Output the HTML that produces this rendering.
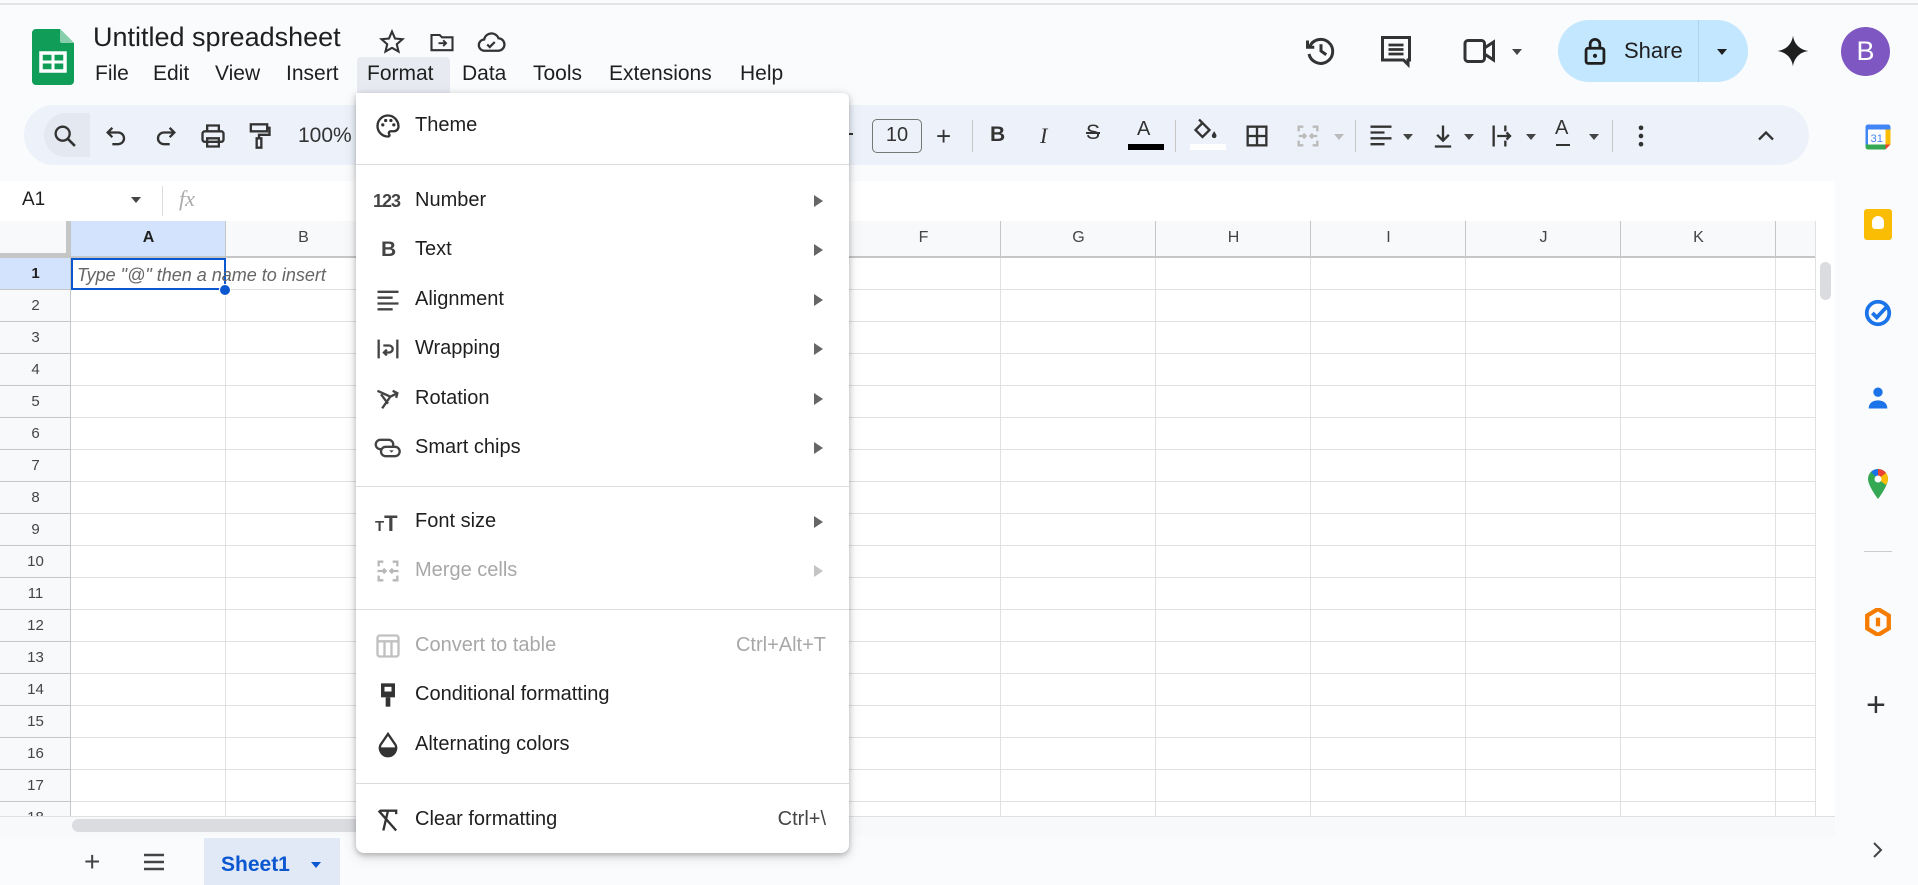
<!DOCTYPE html>
<html><head><meta charset="utf-8"><style>
*{margin:0;padding:0;box-sizing:border-box}
body{width:1918px;height:885px;overflow:hidden;background:#f9fbfd;font-family:"Liberation Sans",Arial,sans-serif;color:#1f1f1f;position:relative}
.a{position:absolute}
.mi{position:absolute;top:62px;font-size:21px;color:#1f1f1f}
.ic{position:absolute;top:122px;width:28px;height:28px}
.rh{position:absolute;left:0;width:71px;text-align:center;font-size:15px;color:#444}
.ch{position:absolute;top:229px;width:155px;text-align:center;font-size:16px;color:#444}
.it{position:absolute;left:415px;font-size:20px;color:#1f1f1f}
.dis{color:#a8a8a8}
.arr{position:absolute;left:814px;width:0;height:0;border-left:9px solid #666;border-top:6px solid transparent;border-bottom:6px solid transparent}
.mic{position:absolute;left:374px;width:28px;height:28px}
.sep{position:absolute;left:356px;width:493px;height:1px;background:#dadce0}
.tsep{position:absolute;top:120px;width:1px;height:32px;background:#c7c7c7}
.car{position:absolute;top:134px;width:0;height:0;border-top:6px solid #444;border-left:5px solid transparent;border-right:5px solid transparent}
</style></head><body>
<div class="a" style="left:0;top:3px;width:1918px;height:2px;background:#e3e3e3"></div>
<svg class="a" style="left:32px;top:29px" width="42" height="56" viewBox="0 0 42 56"><path d="M4 0h24l14 14v38a4 4 0 0 1-4 4H4a4 4 0 0 1-4-4V4a4 4 0 0 1 4-4z" fill="#0f9d58"/><path d="M28 0l14 14H30a2 2 0 0 1-2-2z" fill="#87ceac"/><rect x="9" y="24" width="24" height="18" fill="none" stroke="#fff" stroke-width="3.5"/><path d="M21 24v18M9 33h24" stroke="#fff" stroke-width="3"/></svg>
<div class="a" style="left:93px;top:22px;font-size:27px;color:#1f1f1f">Untitled spreadsheet</div>
<svg class="a" style="left:378px;top:28px" width="28" height="28" viewBox="0 0 24 24"><path d="M12 3l2.6 6 6.4.6-4.9 4.3 1.5 6.3L12 17l-5.6 3.2 1.5-6.3L3 9.6l6.4-.6z" fill="none" stroke="#333" stroke-width="1.8"/></svg>
<svg class="a" style="left:428px;top:28px" width="28" height="28" viewBox="0 0 24 24"><path d="M3 6h7l2 2h9v11H3z" fill="none" stroke="#333" stroke-width="1.8"/><path d="M9 13h6m-2-2.5 2.5 2.5-2.5 2.5" fill="none" stroke="#333" stroke-width="1.6"/></svg>
<svg class="a" style="left:476px;top:27px" width="30" height="30" viewBox="0 0 24 24"><path d="M7 19a4.5 4.5 0 0 1-.5-9A6 6 0 0 1 18 9a4.5 4.5 0 0 1-.5 10z" fill="none" stroke="#333" stroke-width="1.8"/><path d="M9 14l2 2 4-4" fill="none" stroke="#333" stroke-width="1.8"/></svg>
<div class="a" style="left:357px;top:57px;width:93px;height:36px;background:#e7ebf1;border-radius:4px 4px 0 0"></div>
<div class="mi" style="left:95px">File</div><div class="mi" style="left:153px">Edit</div><div class="mi" style="left:215px">View</div><div class="mi" style="left:286px">Insert</div><div class="mi" style="left:367px">Format</div><div class="mi" style="left:462px">Data</div><div class="mi" style="left:533px">Tools</div><div class="mi" style="left:609px">Extensions</div><div class="mi" style="left:740px">Help</div>
<svg class="a" style="left:1303px;top:33px" width="36" height="36" viewBox="0 0 24 24"><path d="M4.5 9A8 8 0 1 1 4 14" fill="none" stroke="#333" stroke-width="2"/><path d="M3 5v4.5h4.5" fill="none" stroke="#333" stroke-width="2"/><path d="M12 7.5V12l3.5 2.5" fill="none" stroke="#333" stroke-width="2"/></svg>
<svg class="a" style="left:1378px;top:33px" width="36" height="36" viewBox="0 0 24 24"><path d="M3 3h18v15h-1v3l-3-3H3z" fill="none" stroke="#333" stroke-width="2"/><path d="M7 8h10M7 11h10M7 14h10" stroke="#333" stroke-width="1.8"/></svg>
<svg class="a" style="left:1462px;top:36px" width="36" height="30" viewBox="0 0 24 20"><rect x="2" y="3" width="13" height="14" rx="2" fill="none" stroke="#333" stroke-width="2"/><path d="M15 8l6-4v12l-6-4" fill="none" stroke="#333" stroke-width="2"/></svg>
<div class="car" style="left:1512px;top:49px"></div>
<div class="a" style="left:1558px;top:20px;width:190px;height:62px;background:#c2e7ff;border-radius:31px"></div>
<div class="a" style="left:1698px;top:20px;width:1px;height:62px;background:#a8d4f0"></div>
<svg class="a" style="left:1584px;top:37px" width="22" height="28" viewBox="0 0 16 20"><rect x="1.5" y="8" width="13" height="11" rx="1.5" fill="none" stroke="#1f1f1f" stroke-width="2"/><path d="M4.5 8V5a3.5 3.5 0 0 1 7 0v3" fill="none" stroke="#1f1f1f" stroke-width="2"/><circle cx="8" cy="13.5" r="1.5" fill="#1f1f1f"/></svg>
<div class="a" style="left:1624px;top:38px;font-size:22px;color:#1f1f1f">Share</div>
<div class="car" style="left:1717px;top:49px;border-top-color:#1f1f1f"></div>
<svg class="a" style="left:1776px;top:33px" width="34" height="36" viewBox="0 0 24 24"><path d="M12 1C12.6 7 17 11.4 23 12 17 12.6 12.6 17 12 23 11.4 17 7 12.6 1 12 7 11.4 11.4 7 12 1z" fill="#1f1f1f"/></svg>
<div class="a" style="left:1841px;top:27px;width:49px;height:49px;border-radius:50%;background:#7e57c2;color:#fff;font-size:27px;text-align:center;line-height:49px">B</div>
<div class="a" style="left:24px;top:105px;width:1785px;height:60px;background:#edf2fa;border-radius:30px"></div>
<div class="a" style="left:44px;top:113px;width:46px;height:44px;background:#e3e8f1;border-radius:22px 0 0 22px"></div>
<svg class="ic" style="left:51px" viewBox="0 0 24 24"><circle cx="10" cy="10" r="6" fill="none" stroke="#333" stroke-width="2"/><path d="M14.5 14.5l6 6" stroke="#333" stroke-width="2.2"/></svg>
<svg class="ic" style="left:103px" viewBox="0 0 24 24"><path d="M8 5L4 9l4 4" fill="none" stroke="#333" stroke-width="2"/><path d="M4 9h9a5 5 0 0 1 0 10H8" fill="none" stroke="#333" stroke-width="2"/></svg>
<svg class="ic" style="left:151px" viewBox="0 0 24 24"><path d="M16 5l4 4-4 4" fill="none" stroke="#333" stroke-width="2"/><path d="M20 9h-9a5 5 0 0 0 0 10h5" fill="none" stroke="#333" stroke-width="2"/></svg>
<svg class="ic" style="left:199px" viewBox="0 0 24 24"><rect x="3" y="8" width="18" height="9" rx="2" fill="none" stroke="#333" stroke-width="2"/><path d="M7 8V3h10v5M7 14h10v7H7z" fill="none" stroke="#333" stroke-width="2"/></svg>
<svg class="ic" style="left:245px" viewBox="0 0 24 24"><rect x="5" y="2" width="14" height="6" fill="none" stroke="#333" stroke-width="2"/><path d="M19 5h2v6h-9v3" fill="none" stroke="#333" stroke-width="2"/><rect x="10" y="14" width="4" height="8" fill="none" stroke="#333" stroke-width="2"/></svg>
<div class="a" style="left:298px;top:124px;font-size:21px;color:#333">100%</div>
<div class="a" style="left:845px;top:133px;width:8px;height:2px;background:#333"></div>
<div class="a" style="left:872px;top:119px;width:50px;height:34px;border:1.5px solid #747775;border-radius:5px;font-size:20px;text-align:center;line-height:31px;color:#333">10</div>
<div class="a" style="left:936px;top:124px;font-size:26px;color:#333;line-height:24px">+</div>
<div class="tsep" style="left:972px"></div>
<div class="a" style="left:990px;top:123px;font-size:21px;font-weight:bold;color:#333">B</div>
<div class="a" style="left:1040px;top:123px;font-size:22px;font-style:italic;font-family:'Liberation Serif',serif;color:#333">I</div>
<div class="a" style="left:1086px;top:121px;font-size:21px;color:#333;text-decoration:line-through">S</div>
<div class="a" style="left:1137px;top:118px;font-size:20px;color:#333">A</div>
<div class="a" style="left:1128px;top:144px;width:36px;height:6px;background:#000"></div>
<div class="tsep" style="left:1175px"></div>
<svg class="ic" style="left:1192px;top:116px" viewBox="0 0 24 24"><path d="M6 3l9 9-6 6-6-6 6-6" fill="none" stroke="#333" stroke-width="2"/><path d="M19 13c1.2 2 2 3 2 4a2 2 0 0 1-4 0c0-1 .8-2 2-4z" fill="#333"/></svg>
<div class="a" style="left:1190px;top:144px;width:36px;height:6px;background:#fff"></div>
<svg class="ic" style="left:1243px" viewBox="0 0 24 24"><rect x="4" y="4" width="16" height="16" fill="none" stroke="#333" stroke-width="2"/><path d="M12 4v16M4 12h16" stroke="#333" stroke-width="2"/></svg>
<svg class="ic" style="left:1294px" viewBox="0 0 24 24"><path d="M4 8V4h4M16 4h4v4M20 16v4h-4M8 20H4v-4M4 12h6m-2-2 2 2-2 2M20 12h-6m2-2-2 2 2 2" fill="none" stroke="#bbb" stroke-width="2"/></svg>
<div class="car" style="left:1334px;border-top-color:#bbb"></div>
<div class="tsep" style="left:1355px"></div>
<svg class="ic" style="left:1367px" viewBox="0 0 24 24"><path d="M3 4h18M3 9h12M3 14h18M3 19h12" stroke="#333" stroke-width="2"/></svg>
<div class="car" style="left:1403px"></div>
<svg class="ic" style="left:1429px" viewBox="0 0 24 24"><path d="M12 3v13m-5-5 5 5 5-5M5 21h14" fill="none" stroke="#333" stroke-width="2"/></svg>
<div class="car" style="left:1464px"></div>
<svg class="ic" style="left:1489px" viewBox="0 0 24 24"><path d="M4 3v18M14 3v5M14 16v5M7 12h11m-3-3 3 3-3 3" fill="none" stroke="#333" stroke-width="2"/></svg>
<div class="car" style="left:1526px"></div>
<div class="a" style="left:1555px;top:117px;font-size:20px;color:#333">A</div>
<div class="a" style="left:1556px;top:144px;width:14px;height:2px;background:#333"></div>
<div class="car" style="left:1589px"></div>
<div class="tsep" style="left:1612px"></div>
<svg class="ic" style="left:1627px" viewBox="0 0 24 24"><circle cx="12" cy="5" r="2" fill="#333"/><circle cx="12" cy="12" r="2" fill="#333"/><circle cx="12" cy="19" r="2" fill="#333"/></svg>
<svg class="ic" style="left:1752px" viewBox="0 0 24 24"><path d="M6 15l6-6 6 6" fill="none" stroke="#333" stroke-width="2"/></svg>
<div class="a" style="left:0;top:181px;width:1835px;height:40px;background:#fff"></div>
<div class="a" style="left:22px;top:189px;font-size:19px;color:#1f1f1f">A1</div>
<div class="car" style="left:131px;top:197px"></div>
<div class="a" style="left:162px;top:186px;width:1px;height:30px;background:#ddd"></div>
<div class="a" style="left:179px;top:186px;font-size:22px;font-style:italic;font-family:'Liberation Serif',serif;color:#aaa">fx</div>
<!-- grid -->
<div class="a" style="left:0;top:221px;width:1835px;height:595px;background:#fff"></div>
<div class="a" style="left:71px;top:258px;width:1744px;height:558px;background:repeating-linear-gradient(180deg,transparent 0 31px,#e1e1e1 31px 32px),repeating-linear-gradient(90deg,transparent 0 154px,#e1e1e1 154px 155px)"></div>
<div class="a" style="left:0;top:258px;width:71px;height:558px;background:#f8f9fa repeating-linear-gradient(180deg,transparent 0 31px,#c4c7c5 31px 32px)"></div>
<div class="a" style="left:71px;top:221px;width:1744px;height:37px;background:#f8f9fa repeating-linear-gradient(90deg,transparent 0 154px,#c4c7c5 154px 155px)"></div>
<div class="a" style="left:0;top:221px;width:71px;height:37px;background:#f8f9fa;border-right:5px solid #c4c7c5;border-bottom:5px solid #c4c7c5"></div>
<div class="a" style="left:71px;top:221px;width:154px;height:37px;background:#d3e3fd"></div>
<div class="a" style="left:0;top:256px;width:1815px;height:2px;background:#c4c7c5"></div>
<div class="a" style="left:0;top:258px;width:70px;height:31px;background:#d3e3fd"></div>
<div class="a" style="left:70px;top:221px;width:1px;height:595px;background:#c4c7c5"></div>
<div class="ch" style="left:71px;font-weight:bold;color:#1f1f1f">A</div><div class="ch" style="left:226px">B</div><div class="ch" style="left:846px">F</div><div class="ch" style="left:1001px">G</div><div class="ch" style="left:1156px">H</div><div class="ch" style="left:1311px">I</div><div class="ch" style="left:1466px">J</div><div class="ch" style="left:1621px">K</div>
<div class="rh" style="top:265px;font-weight:bold;color:#1f1f1f">1</div><div class="rh" style="top:297px">2</div><div class="rh" style="top:329px">3</div><div class="rh" style="top:361px">4</div><div class="rh" style="top:393px">5</div><div class="rh" style="top:425px">6</div><div class="rh" style="top:457px">7</div><div class="rh" style="top:489px">8</div><div class="rh" style="top:521px">9</div><div class="rh" style="top:553px">10</div><div class="rh" style="top:585px">11</div><div class="rh" style="top:617px">12</div><div class="rh" style="top:649px">13</div><div class="rh" style="top:681px">14</div><div class="rh" style="top:713px">15</div><div class="rh" style="top:745px">16</div><div class="rh" style="top:777px">17</div><div class="rh" style="top:809px;height:7px;overflow:hidden">18</div>
<div class="a" style="left:71px;top:258px;width:155px;height:32px;border:2px solid #0b57d0"></div>
<div class="a" style="left:77px;top:265px;font-size:18px;font-style:italic;color:#666;white-space:nowrap">Type "@" then a name to insert</div>
<div class="a" style="left:219px;top:284px;width:12px;height:12px;border-radius:50%;background:#0b57d0;border:1.5px solid #fff"></div>
<div class="a" style="left:1815px;top:221px;width:20px;height:595px;background:#fff;border-left:1px solid #e1e1e1"></div>
<div class="a" style="left:1820px;top:262px;width:11px;height:38px;background:#dadce0;border-radius:6px"></div>
<div class="a" style="left:0;top:816px;width:1835px;height:20px;background:#f8f9fa;border-top:1px solid #e1e1e1"></div>
<div class="a" style="left:72px;top:819px;width:300px;height:13px;background:#dadce0;border-radius:7px"></div>
<div class="a" style="left:84px;top:850px;font-size:28px;color:#444;line-height:24px">+</div>
<svg class="a" style="left:143px;top:853px" width="22" height="18" viewBox="0 0 22 18"><path d="M1 2h20M1 9h20M1 16h20" stroke="#444" stroke-width="2.4"/></svg>
<div class="a" style="left:204px;top:838px;width:136px;height:47px;background:#e1e9f7"></div>
<div class="a" style="left:221px;top:853px;font-size:21px;font-weight:bold;color:#0b57d0">Sheet1</div>
<div class="car" style="left:311px;top:862px;border-top-color:#0b57d0"></div>
<svg class="a" style="left:1863px;top:122px" width="30" height="30" viewBox="0 0 24 24"><rect x="2" y="2" width="20" height="20" rx="2" fill="#fff"/><path d="M2 6h20V4a2 2 0 0 0-2-2H4a2 2 0 0 0-2 2z" fill="#4285f4"/><path d="M2 18v2a2 2 0 0 0 2 2h14v-4z" fill="#34a853"/><path d="M18 18v4l4-4z" fill="#ea4335"/><path d="M18 6h4v12h-4z" fill="#fbbc04"/><path d="M2 6h2v12H2z" fill="#4285f4"/><text x="11" y="16" font-size="9" font-family="Liberation Sans" fill="#4285f4" text-anchor="middle">31</text></svg>
<div class="a" style="left:1864px;top:209px;width:28px;height:31px;background:#fbbc04;border-radius:3px"></div>
<div class="a" style="left:1872px;top:216px;width:12px;height:13px;background:#fff;border-radius:6px 6px 3px 3px"></div>
<svg class="a" style="left:1863px;top:298px" width="30" height="30" viewBox="0 0 24 24"><circle cx="12" cy="12" r="9" fill="none" stroke="#1a73e8" stroke-width="3"/><path d="M7.5 12l3.5 3.5L20 6" fill="none" stroke="#1a73e8" stroke-width="3"/></svg>
<svg class="a" style="left:1864px;top:383px" width="28" height="30" viewBox="0 0 24 24"><circle cx="12" cy="7" r="4" fill="#1a73e8"/><path d="M4 21c0-5 4-7 8-7s8 2 8 7z" fill="#1a73e8"/></svg>
<svg class="a" style="left:1866px;top:469px" width="24" height="30" viewBox="0 0 24 30"><path d="M12 0a10 10 0 0 0-10 10c0 7 10 20 10 20s10-13 10-20A10 10 0 0 0 12 0z" fill="#34a853"/><path d="M12 0a10 10 0 0 0-7 3l7 7z" fill="#1a73e8"/><path d="M12 0a10 10 0 0 1 8 4l-8 6z" fill="#ea4335"/><path d="M20 4a10 10 0 0 1 2 6c0 2-1 4-2 6l-8-6z" fill="#fbbc04"/><circle cx="12" cy="10" r="3.5" fill="#fff"/></svg>
<div class="a" style="left:1864px;top:551px;width:28px;height:1px;background:#ccc"></div>
<svg class="a" style="left:1865px;top:608px" width="26" height="28" viewBox="0 0 24 26"><path d="M12 1l10 6v12l-10 6L2 19V7z" fill="none" stroke="#f57c00" stroke-width="4"/><path d="M12 9v8" stroke="#f57c00" stroke-width="4"/></svg>
<div class="a" style="left:1866px;top:688px;font-size:34px;color:#333;line-height:34px">+</div>
<svg class="a" style="left:1871px;top:840px" width="14" height="20" viewBox="0 0 14 20"><path d="M3 3l7 7-7 7" fill="none" stroke="#444" stroke-width="2"/></svg>
<!-- menu -->
<div class="a" style="left:356px;top:93px;width:493px;height:760px;background:#fff;border-radius:0 6px 8px 8px;box-shadow:0 2px 6px rgba(0,0,0,.25),0 4px 14px rgba(0,0,0,.12)"></div>
<svg class="mic" style="top:112px" viewBox="0 0 24 24"><path d="M12 3a9 9 0 0 0 0 18c1.2 0 1.6-1 1-2-.6-1-.2-2.5 1.5-2.5H17a4 4 0 0 0 4-4c0-5-4-9.5-9-9.5z" fill="none" stroke="#333" stroke-width="2"/><circle cx="7.5" cy="11" r="1.4" fill="#333"/><circle cx="10" cy="7.3" r="1.4" fill="#333"/><circle cx="14.5" cy="7.3" r="1.4" fill="#333"/><circle cx="17" cy="11" r="1.4" fill="#333"/></svg>
<div class="it" style="top:114px">Theme</div>
<div class="sep" style="top:164px"></div>
<div class="a" style="left:373px;top:191px;font-size:18px;font-weight:bold;color:#444;letter-spacing:-1px">123</div>
<div class="it" style="top:189px">Number</div><div class="arr" style="top:195px"></div>
<div class="a" style="left:381px;top:238px;font-size:21px;font-weight:bold;color:#444">B</div>
<div class="it" style="top:238px">Text</div><div class="arr" style="top:244px"></div>
<svg class="mic" style="top:286px" viewBox="0 0 24 24"><path d="M3 5h18M3 10h13M3 15h18M3 20h13" stroke="#444" stroke-width="2"/></svg>
<div class="it" style="top:288px">Alignment</div><div class="arr" style="top:294px"></div>
<svg class="mic" style="top:335px" viewBox="0 0 24 24"><path d="M4 4v16M20 4v16M8 9h5a3 3 0 0 1 0 6h-4m2-2.5L8.5 15l2.5 2.5" fill="none" stroke="#444" stroke-width="2"/></svg>
<div class="it" style="top:337px">Wrapping</div><div class="arr" style="top:343px"></div>
<svg class="mic" style="top:385px" viewBox="0 0 24 24"><path d="M3 5l11 5-7 10M6 8l6 8M14 10l6-3M16 5l4 2-1 4" fill="none" stroke="#444" stroke-width="2"/></svg>
<div class="it" style="top:387px">Rotation</div><div class="arr" style="top:393px"></div>
<svg class="mic" style="top:434px" viewBox="0 0 24 24"><rect x="1.5" y="5" width="15" height="8" rx="4" fill="none" stroke="#444" stroke-width="2"/><rect x="6" y="11" width="16" height="8" rx="4" fill="#fff" stroke="#444" stroke-width="2"/><path d="M13 14h4l-2 2z" fill="#444"/></svg>
<div class="it" style="top:436px">Smart chips</div><div class="arr" style="top:442px"></div>
<div class="sep" style="top:486px"></div>
<div class="a" style="left:375px;top:511px;font-weight:bold;color:#444"><span style="font-size:15px">T</span><span style="font-size:22px">T</span></div>
<div class="it" style="top:510px">Font size</div><div class="arr" style="top:516px"></div>
<svg class="mic" style="top:557px" viewBox="0 0 24 24"><path d="M4 8V4h4M16 4h4v4M20 16v4h-4M8 20H4v-4M3 12h7m-2-2 2 2-2 2M21 12h-7m2-2-2 2 2 2" fill="none" stroke="#b8b8b8" stroke-width="2"/></svg>
<div class="it dis" style="top:559px">Merge cells</div><div class="arr" style="top:565px;border-left-color:#c4c4c4"></div>
<div class="sep" style="top:609px"></div>
<svg class="mic" style="top:632px" viewBox="0 0 24 24"><rect x="3" y="3" width="18" height="18" rx="2" fill="none" stroke="#c0c0c0" stroke-width="2"/><path d="M3 8h18M9 8v13M15 8v13" stroke="#c0c0c0" stroke-width="2"/></svg>
<div class="it dis" style="top:634px">Convert to table</div>
<div class="a dis" style="left:700px;top:634px;width:126px;text-align:right;font-size:20px">Ctrl+Alt+T</div>
<svg class="mic" style="top:681px" viewBox="0 0 24 24"><path d="M6 2h12v12H6z" fill="#333"/><path d="M9 5h6v4H9z" fill="#fff"/><rect x="10" y="14" width="4" height="8" fill="#333"/></svg>
<div class="it" style="top:683px">Conditional formatting</div>
<svg class="mic" style="top:731px" viewBox="0 0 24 24"><path d="M12 2.5l6.5 9.5a7 7 0 1 1-13 0z" fill="none" stroke="#333" stroke-width="2"/><path d="M5 14h14a7 7 0 0 1-14 0z" fill="#333"/></svg>
<div class="it" style="top:733px">Alternating colors</div>
<div class="sep" style="top:783px"></div>
<svg class="mic" style="top:806px" viewBox="0 0 24 24"><path d="M5 4h14v3M12 4l-4 17M4 4l15 17" fill="none" stroke="#333" stroke-width="2"/></svg>
<div class="it" style="top:808px">Clear formatting</div>
<div class="a" style="left:700px;top:808px;width:126px;text-align:right;font-size:20px;color:#444">Ctrl+\</div>
</body></html>
